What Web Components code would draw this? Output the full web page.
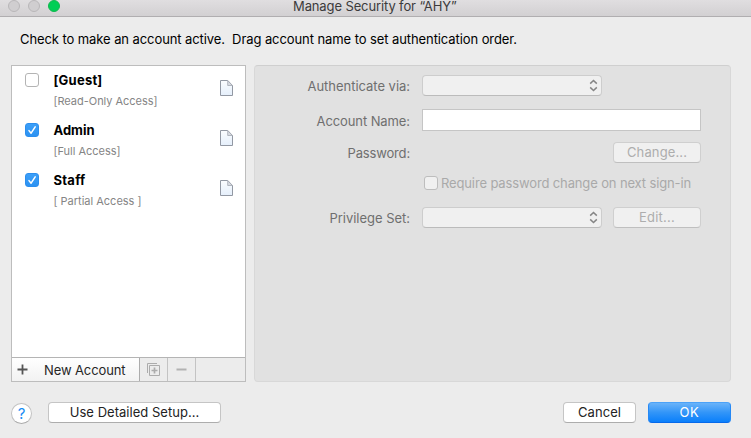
<!DOCTYPE html>
<html lang="en">
<head>
<meta charset="utf-8">
<title>Manage Security</title>
<style>
html,body{margin:0;height:100%;overflow:hidden}
body{background:#ececec;font-family:Inter,"Liberation Sans",sans-serif;font-size:13px;line-height:16px;color:#000}
</style>
</head>
<body>
<security-dialog></security-dialog>
<script>
const define = (name, html, init) => {
  const t = document.createElement('template');
  t.innerHTML = html;
  customElements.define(name, class extends HTMLElement {
    constructor() {
      super();
      this.attachShadow({ mode: 'open' }).append(t.content.cloneNode(true));
    }
    connectedCallback() { if (init) init(this, this.shadowRoot); }
  });
};

/* Single-line text whose tracking is adjusted to fill the width in "w". */
define('fit-text', `<style>:host{display:inline-block;white-space:pre;text-align:left;flex:none}span{display:inline-block}</style><span><slot></slot></span>`,
  (el, root) => {
    const s = root.querySelector('span'), w = +el.getAttribute('w');
    const natural = s.getBoundingClientRect().width;
    s.style.letterSpacing = ((w - natural) / el.textContent.length).toFixed(4) + 'px';
    el.style.width = w + 'px';
  });

define('title-bar', `<style>
:host{display:flex;box-sizing:border-box;height:17px;border-bottom:1px solid #b0aeb0;background:linear-gradient(#e0dee0,#d2d0d2);padding-left:8px;color:#3c3b3c;align-items:flex-start}
i{box-sizing:border-box;width:12px;height:12px;border-radius:50%;margin-right:8px;background:#d0ced0;border:1px solid #b9b7b9}
i.on{background:#00ce55;border-color:#11b84e}
fit-text{margin-left:225px;line-height:12px}
</style><i></i><i></i><i class="on"></i><fit-text w="163.5">Manage Security for “AHY”</fit-text>`);

define('check-box', `<style>
:host{display:block;box-sizing:border-box;width:14px;height:14px;border:1px solid #b4b4b4;border-radius:3px;background:#fff;flex:none}
:host([disabled]){background:#f0f0f0;border-color:#bdbdbd}
:host([checked]){border-color:#2c8eee;background:linear-gradient(#3c9ff8,#2b92f2)}
svg{display:none}:host([checked]) svg{display:block}
</style><svg width="12" height="12" viewBox="0 0 12 12"><path d="M3 6.6 5.1 9.2 9.2 2.8" fill="none" stroke="#fff" stroke-width="1.5" stroke-linecap="round" stroke-linejoin="round"/></svg>`);

define('account-row', `<style>
:host{display:flex;height:50px;box-sizing:border-box;padding:7px 12px 0 13px}
div{margin:-1px 0 0 14.5px;flex:1;display:flex;flex-direction:column}
.n{font-weight:700}
.p{font-size:11px;color:#858585;margin-top:5px}
svg{margin-top:7px;flex:none}
</style><slot name="check"></slot><div><span class="n"><slot name="name"></slot></span><span class="p"><slot name="privilege"></slot></span></div>
<svg width="13" height="16" viewBox="0 0 13 16"><defs><linearGradient id="g" x2="0" y2="1"><stop stop-color="#fafcfe"/><stop offset="1" stop-color="#e5effb"/></linearGradient></defs><path d="M.5.5h7.2l4.8 5v10H.5z" fill="url(#g)" stroke="#9298a3"/><path d="M7.7.6v4.9h4.7z" fill="#d8dbe1" stroke="#a3a8b2" stroke-width=".8"/></svg>`);

define('list-tools', `<style>
:host{display:flex;height:24px;box-sizing:border-box;border-top:1px solid #b4b4b4;background:#ececec}
div{box-sizing:border-box;border-right:1px solid #c3c3c3;width:28px;display:flex;align-items:center;justify-content:center}
.new{width:128px;background:linear-gradient(#fff,#f2f2f2);border-right-color:#acacac;justify-content:flex-start;padding-left:5px;color:#262626}
.new fit-text{margin-left:16px}
</style><div class="new"><svg width="11" height="11" viewBox="0 0 11 11"><path d="M5.5.5v10M.5 5.5h10" stroke="#555" stroke-width="1.8"/></svg><fit-text w="81.5">New Account</fit-text></div>
<div><svg width="13" height="13" viewBox="0 0 13 13" fill="none" stroke="#acacac"><path d="M.5 10V.5H10"/><path d="M2.5 2.5h10v10h-10z"/><path d="M7.5 4.5v6M4.5 7.5h6" stroke-width="1.7"/></svg></div>
<div><svg width="11" height="3"><path d="M.5 1.5h10" stroke="#b2b2b2" stroke-width="2"/></svg></div>`);

define('account-list', `<style>
:host{display:flex;flex-direction:column;box-sizing:border-box;width:235px;height:317px;border:1px solid #bdbdbd;background:#fff}
.rows{flex:1}
</style><div class="rows"><slot></slot></div><list-tools></list-tools>`);

define('push-button', `<style>
:host{display:flex;box-sizing:border-box;height:21px;border:1px solid #c5c5c5;border-bottom-color:#adadad;border-radius:4px;background:#fff;align-items:center;justify-content:center;color:#222;flex:none;padding-bottom:1px}
:host([disabled]){background:#f0f0f0;border-color:#cfcfcf;border-bottom-color:#bfbfbf;color:#adadad}
:host([primary]){background:linear-gradient(#6ab3f9,#3295f8 50%,#0a7ffb);border-color:#4ba2f8 #2588f5 #0669ea;color:#fff}
</style><slot></slot>`);

define('pop-up', `<style>
:host{display:flex;box-sizing:border-box;width:180px;height:21px;border:1px solid #cdcdcd;border-bottom-color:#bbb;border-radius:4px;background:#f0f0f0;align-items:center;justify-content:flex-end;padding-right:3px}
</style><svg width="9" height="13" viewBox="0 0 9 13"><path d="M1.2 4.6 4.5 1.5 7.8 4.6M1.2 8.4 4.5 11.5 7.8 8.4" fill="none" stroke="#858585" stroke-width="1.5"/></svg>`);

define('form-row', `<style>
:host{display:flex;height:21px;align-items:center}
.l{width:155px;display:flex;justify-content:flex-end;margin-right:12px;color:#6f6f6f;flex:none}
</style><span class="l"><slot name="label"></slot></span><slot></slot>`);

define('account-form', `<style>
:host{display:block;box-sizing:border-box;width:477px;height:317px;border:1px solid #d8d8d8;border-top-color:#cfcfcf;border-radius:4px;background:#e1e1e1;padding-top:9px}
.field{box-sizing:border-box;width:279px;height:22px;background:#fff;border:1px solid #c5c5c5}
.end{margin-left:auto;margin-right:29px;width:88px}
.after{margin-left:11px;width:88px}
.name{height:22px;margin-top:13px}.name fit-text{padding-top:2px}
.pass{margin-top:11px}.req{height:14px;margin-top:13px;color:#a9a9a9}.priv{margin-top:17px}
check-box{margin-left:2px}.req>fit-text{margin-left:3px}
</style>
<form-row><fit-text slot="label" w="102.5">Authenticate via:</fit-text><pop-up></pop-up></form-row>
<form-row class="name"><fit-text slot="label" w="93.5">Account Name:</fit-text><div class="field"></div></form-row>
<form-row class="pass"><fit-text slot="label" w="62.5">Password:</fit-text><push-button class="end" disabled><fit-text w="60">Change...</fit-text></push-button></form-row>
<form-row class="req"><check-box disabled></check-box><fit-text w="250">Require password change on next sign-in</fit-text></form-row>
<form-row class="priv"><fit-text slot="label" w="80.5">Privilege Set:</fit-text><pop-up></pop-up><push-button class="after" disabled><fit-text w="36">Edit...</fit-text></push-button></form-row>`);

define('help-button', `<style>
:host{display:flex;box-sizing:border-box;width:21px;height:21px;border:1px solid #c2c2c2;border-bottom-color:#aaa;border-radius:50%;background:#fff;color:#168cf5;align-items:center;justify-content:center;font-size:15px}
</style><slot></slot>`);

define('security-dialog', `<style>
:host{display:flex;flex-direction:column;width:751px;height:438px;background:#ececec}
.intro{box-sizing:border-box;padding:14px 0 0 20px;height:48px}
.main{display:flex;gap:8px;padding-left:11px}
.foot{display:flex;padding:20px 20px 0 11px}
help-button{margin-top:1px}
</style>
<title-bar></title-bar>
<div class="intro"><fit-text w="497">Check to make an account active.  Drag account name to set authentication order.</fit-text></div>
<div class="main">
<account-list>
<account-row><check-box slot="check"></check-box><fit-text slot="name" w="49">[Guest]</fit-text><fit-text slot="privilege" w="104">[Read-Only Access]</fit-text></account-row>
<account-row><check-box slot="check" checked></check-box><fit-text slot="name" w="41">Admin</fit-text><fit-text slot="privilege" w="67">[Full Access]</fit-text></account-row>
<account-row><check-box slot="check" checked></check-box><fit-text slot="name" w="32">Staff</fit-text><fit-text slot="privilege" w="88">[ Partial Access ]</fit-text></account-row>
</account-list>
<account-form></account-form>
</div>
<div class="foot"><help-button>?</help-button>
<push-button style="width:173px;margin-left:16px"><fit-text w="129.5">Use Detailed Setup...</fit-text></push-button>
<push-button style="width:73px;margin-left:auto"><fit-text w="43">Cancel</fit-text></push-button>
<push-button primary style="width:83px;margin-left:12px"><fit-text w="20">OK</fit-text></push-button></div>`);
</script>
</body>
</html>
